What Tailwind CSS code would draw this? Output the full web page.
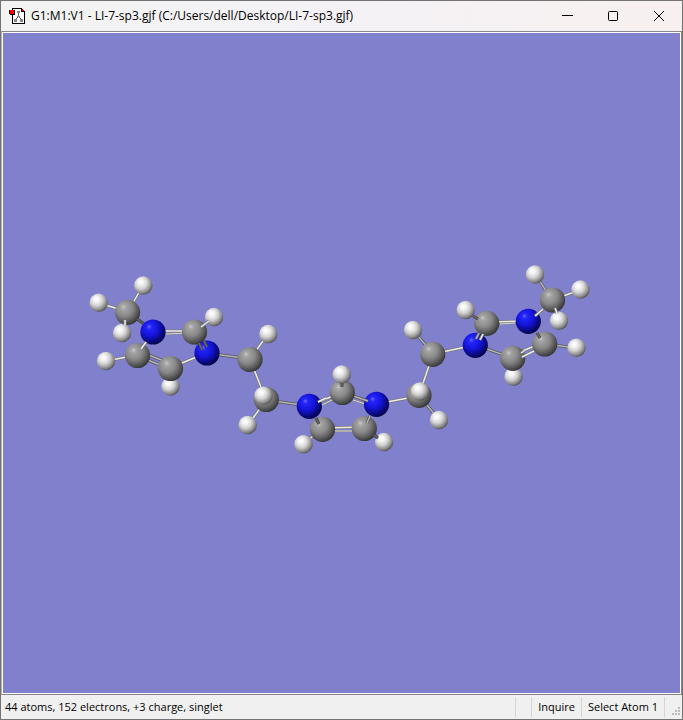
<!DOCTYPE html>
<html lang="en">
<head>
<meta charset="utf-8">
<title>G1:M1:V1 - LI-7-sp3.gjf</title>
<script src="https://cdn.jsdelivr.net/npm/@tailwindcss/browser@4"></script>
</head>
<body class="font-['Open_Sans','Noto_Sans',sans-serif] text-xs text-black">
<div class="flex min-h-screen flex-col border border-[#737373] bg-[#f0f0f0]">
  <header class="flex h-[30px] shrink-0 items-center bg-linear-to-r from-[#f3f3f3] via-[#f4f2f6] to-[#f8f0ef] pl-2">
    <svg class="mr-1.5 size-4 shrink-0" viewBox="0 0 16 16" shape-rendering="crispEdges" aria-hidden="true">
      <path d="M3 0H13V1H14V2H15V3H16V16H3Z" fill="#000"/>
      <path d="M4 1H12V4H15V15H4Z" fill="#fff"/>
      <path d="M13 1h1v1h1v1h-2z" fill="#f00"/>
      <path d="M9 5h1v4H9zM8 9h1v1H8zM7 10h1v2H7zM10 9h1v1h-1zM11 10h1v2h-1z" fill="#666"/>
      <path d="M8 3h3v2H8zM5 11h3v3H5zM11 11h3v3h-3zM8 8h3v1H8z" fill="#858585"/>
      <path d="M0 2h6v5H1V6H0z" fill="#000"/>
      <path d="M1 2h4v4H1z" fill="#f00"/>
    </svg>
    <h1 class="min-w-0 flex-1 truncate">G1:M1:V1 - LI-7-sp3.gjf (C:/Users/dell/Desktop/LI-7-sp3.gjf)</h1>
    <div class="flex h-full">
      <button type="button" aria-label="Minimize" class="grid w-[46px] place-items-center"><svg class="size-3" viewBox="0 0 12 12"><path d="M1 5.5H12" stroke="#000"/></svg></button>
      <button type="button" aria-label="Maximize" class="grid w-[46px] place-items-center"><svg class="size-3" viewBox="0 0 12 12"><rect x="1.5" y="1.5" width="9" height="9" rx="1" fill="none" stroke="#000"/></svg></button>
      <button type="button" aria-label="Close" class="grid w-[46px] place-items-center"><svg class="size-3" viewBox="0 0 12 12"><path d="M1 1L11 11M11 1L1 11" stroke="#000"/></svg></button>
    </div>
  </header>
  <main class="flex flex-1 border border-t-[#85858c] border-r-[#85858c] border-b-[#85858c] border-l-[#b4b4b8]">
    <div class="flex flex-1 border border-white bg-[#8080cc]">
      <svg id="molecule" class="min-h-0 w-full flex-1" viewBox="3 33 677 660" role="img" aria-label="Ball and stick model of the molecule">
        <defs>
          <radialGradient id="C" cx=".4" cy=".38" r=".66" fx=".34" fy=".28">
            <stop offset="0" stop-color="#c8c8c8"/><stop offset=".16" stop-color="#a4a4a4"/><stop offset=".5" stop-color="#888"/><stop offset=".8" stop-color="#565656"/><stop offset="1" stop-color="#303030"/>
          </radialGradient>
          <radialGradient id="N" cx=".4" cy=".38" r=".66" fx=".34" fy=".28">
            <stop offset="0" stop-color="#6868ff"/><stop offset=".16" stop-color="#2424fc"/><stop offset=".5" stop-color="#1414d8"/><stop offset=".8" stop-color="#09097c"/><stop offset="1" stop-color="#040440"/>
          </radialGradient>
          <radialGradient id="H" cx=".4" cy=".38" r=".66" fx=".36" fy=".3">
            <stop offset="0" stop-color="#fff"/><stop offset=".2" stop-color="#f6f6f6"/><stop offset=".5" stop-color="#d2d2d2"/><stop offset=".8" stop-color="#8c8c8c"/><stop offset="1" stop-color="#4c4c4c"/>
          </radialGradient>
        </defs>
      </svg>
    </div>
  </main>
  <footer class="flex h-6 shrink-0 items-center pl-1 text-[11px]">
    <p class="flex-1">44 atoms, 152 electrons, +3 charge, singlet</p>
    <div class="flex h-5 items-center">
      <span class="h-full w-4 border-l border-[#d4d4d4]"></span>
      <span class="flex h-full items-center border-l border-[#d4d4d4] px-1.5">Inquire</span>
      <span class="flex h-full items-center border-l border-[#d4d4d4] px-1.5">Select Atom 1</span>
      <span class="flex h-full w-[18px] items-end border-l border-[#d4d4d4] pl-[6px]">
        <svg class="size-[10px]" viewBox="0 0 10 10" fill="#bdbdbd" aria-hidden="true"><path d="M7 0h2v2H7zM4 3h2v2H4zM7 3h2v2H7zM1 6h2v2H1zM4 6h2v2H4zM7 6h2v2H7z"/></svg>
      </span>
    </div>
  </footer>
</div>
<script>
// Draw order runs from back to front. Bonds: [tone, x1, y1, x2, y2]; atoms: [element, x, y].
const scene = [
  ['H',170.5,386.5], ['H',513.5,376.7],
  ['light',160,331,190,331], ['thin',165,334,188,333],
  ['mid',141,352,169,363], ['mid',140,357,168,368],
  ['light',172,367,204,354], ['light',137,355,106,361],
  ['mid',207,353,250,359], ['light',250,359,268,334],
  ['light',250,359,266,400], ['light',266,400,248,425],
  ['mid',266,400,309,406], ['light',309,406,340,393], ['thin',322,405,332,400],
  ['mid',345,393,376,404], ['thin',353,400,365,404],
  ['light',323,428,364,427], ['thin',334,431,352,431],
  ['light',322,429,303,444], ['dark',364,428,384,442],
  ['light',376,404,419,396], ['light',419,395,433,354],
  ['mid',419,395,439,420], ['mid',433,354,413,330], ['light',433,354,475,345],
  ['light',488,322,524,321], ['thin',500,324,515,323],
  ['mid',475,345,513,358], ['light',515,354,542,343], ['light',518,359,542,347],
  ['mid',545,344,576,348], ['light',552,300,580,290], ['mid',552,300,535,274],
  ['light',128,312,143,285], ['light',128,312,99,303],
  ['C',194.5,332], ['H',214,317], ['light',201,327,209,321],
  ['N',207,353], ['dark',199,343,202,350], ['dark',204,341,207,347],
  ['C',127.5,312.3], ['dark',137,319,147,326],
  ['N',153,332], ['C',137.5,355.5], ['light',141,349,146,342],
  ['C',170.5,368.5], ['H',122,333], ['light',125,320,125,325],
  ['H',143.3,285.5], ['H',98.7,302.7], ['H',106,361],
  ['C',250,359.5], ['H',268.3,334], ['C',266.3,399.5], ['H',263.5,395.7], ['H',247.7,425],
  ['C',342.3,392.5], ['H',341.7,374.5], ['dark',342,383,342,387],
  ['N',309.3,406.3], ['light',318,402,326,398],
  ['N',376.5,404.3], ['mid',362,399,368,401],
  ['C',322.5,429.3], ['dark',316,418,319,424],
  ['C',364.3,428.5], ['mid',367,423,370,416],
  ['H',303.5,444.3], ['H',384,442], ['dark',374,435,378,438],
  ['C',432.7,354.3], ['C',419,395.3], ['H',420,391.5],
  ['H',413,330], ['H',439,420], ['N',475.3,345.3], ['C',486.7,323.3],
  ['mid',476,339,479,333], ['light',480,340,483,334],
  ['H',465.7,310], ['dark',473,316,478,319],
  ['N',528.3,321.3], ['C',552.5,300], ['light',535,316,543,309],
  ['C',544.7,344], ['dark',537,333,540,338], ['C',512.7,358.3],
  ['light',521,353,524,351], ['light',522,357,526,355],
  ['H',559,320.7], ['light',555,308,557,313],
  ['H',535,274.5], ['H',580.5,289.5], ['H',576.5,347.7]
];
const tones = {
  light: ['#77777c', '#eeeee8', 3], mid: ['#55555a', '#b5b5b5', 3],
  dark: ['#3e3e3e', '#696969', 3], thin: ['#858585', '#d8d8d8', 2]
};
const svg = document.getElementById('molecule');
const add = (name, attrs) => {
  const el = document.createElementNS('http://www.w3.org/2000/svg', name);
  for (const key in attrs) el.setAttribute(key, attrs[key]);
  svg.append(el);
};
for (const [kind, x, y, x2, y2] of scene) {
  if (tones[kind]) {
    const [edge, face, width] = tones[kind];
    add('line', {x1: x, y1: y, x2, y2, stroke: edge, 'stroke-width': width});
    add('line', {x1: x, y1: y, x2, y2, stroke: face, 'stroke-width': width / 2});
  } else {
    add('circle', {cx: x, cy: y, r: kind === 'H' ? 9.2 : 12.6, fill: `url(#${kind})`});
  }
}
</script>
</body>
</html>
